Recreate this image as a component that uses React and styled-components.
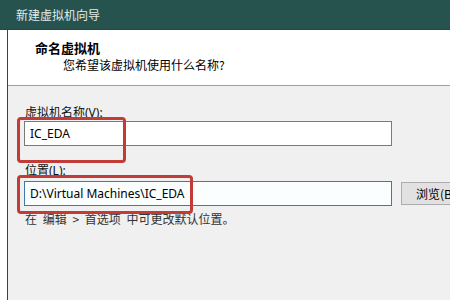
import React from 'react';
import styled, { createGlobalStyle } from 'styled-components';

const GlobalStyle = createGlobalStyle`
  html, body {
    margin: 0;
    padding: 0;
    background: #ffffff;
  }
  body {
    font-family: "Noto Sans", "Noto Sans CJK SC", sans-serif;
  }
`;

const App = () => {
  return (
    <Screen>
      <GlobalStyle />
      <TitleBar>新建虚拟机向导</TitleBar>
      <Frame>
        <Header>
          <Heading>命名虚拟机</Heading>
          <SubHeading>您希望该虚拟机使用什么名称?</SubHeading>
        </Header>
        <Body>
          <Label>虚拟机名称(V):</Label>
          <Field defaultValue="IC_EDA" />
          <Label $gap={17}>位置(L):</Label>
          <FieldRow>
            <Field defaultValue="D:\Virtual Machines\IC_EDA" $focused />
            <Button>浏览(B)...</Button>
          </FieldRow>
          <Hint>在 编辑 &gt; 首选项 中可更改默认位置。</Hint>
        </Body>
      </Frame>
      <Highlight style={{ left: 17, top: 117, width: 109, height: 46 }} />
      <Highlight style={{ left: 17, top: 175, width: 176, height: 39 }} />
    </Screen>
  );
};

//-----------Styles--------------

const Screen = styled.div`
  position: relative;
  width: 450px;
  height: 300px;
  overflow: hidden;
  background: #ffffff;
`;

const TitleBar = styled.div`
  height: 30px;
  line-height: 29px;
  padding-left: 16px;
  background: #27534e;
  border-bottom: 1px solid #224a45;
  box-sizing: border-box;
  color: #e4ebe9;
  font-size: 12px;
  font-family: "Noto Sans CJK SC", sans-serif;
  white-space: nowrap;
`;

const Frame = styled.div`
  margin-left: 7px;
  height: 270px;
  border-left: 1px solid #3f3f3f;
  background: #f0f0f0;
`;

const Header = styled.div`
  height: 56px;
  box-sizing: border-box;
  padding: 10px 0 0 27px;
  background: #ffffff;
  border-bottom: 1px solid #a0a0a0;
  font-family: "Noto Sans CJK SC", sans-serif;
`;

const Heading = styled.div`
  font-size: 13px;
  line-height: 16px;
  font-weight: bold;
  color: #000;
`;

const SubHeading = styled.div`
  margin: 1px 0 0 28px;
  font-size: 12px;
  line-height: 16px;
  color: #000;
  white-space: nowrap;
`;

const Body = styled.div`
  padding: 19px 0 0 16px;
`;

const Label = styled.div`
  margin-top: ${(p) => p.$gap || 0}px;
  padding-left: 1px;
  font-size: 12px;
  line-height: 16px;
  color: #111;
  font-family: "Noto Sans", "Noto Sans CJK SC", sans-serif;
`;

const FieldRow = styled.div`
  display: flex;
  align-items: center;
  gap: 9px;
  margin-top: 2px;
`;

const Field = styled.input`
  display: block;
  width: 368px;
  height: 25px;
  box-sizing: border-box;
  margin: 0;
  padding: 0 5px;
  flex-shrink: 0;
  border: 1px solid ${(p) => (p.$focused ? '#3f7aa6' : '#7a7a7a')};
  background: ${(p) => (p.$focused ? '#fbfeff' : '#ffffff')};
  font-family: "Noto Sans", sans-serif;
  font-size: 12px;
  color: #000;
  outline: none;
`;

const Button = styled.button`
  flex-shrink: 0;
  width: 75px;
  height: 23px;
  padding: 0 0 0 14px;
  text-align: left;
  border: 1px solid #adadad;
  background: #e1e1e1;
  font-family: "Noto Sans CJK SC", sans-serif;
  font-size: 12px;
  color: #000;
  white-space: nowrap;
`;

const Hint = styled.div`
  margin-top: 5px;
  padding-left: 1px;
  font-size: 12px;
  line-height: 16px;
  word-spacing: 3px;
  color: #333;
  font-family: "Noto Sans CJK SC", sans-serif;
  white-space: nowrap;
`;

const Highlight = styled.div`
  position: absolute;
  box-sizing: border-box;
  border: 3px solid #c23b36;
  border-radius: 4px;
  pointer-events: none;
`;

//-----------------End Styles---------------

export default App;
